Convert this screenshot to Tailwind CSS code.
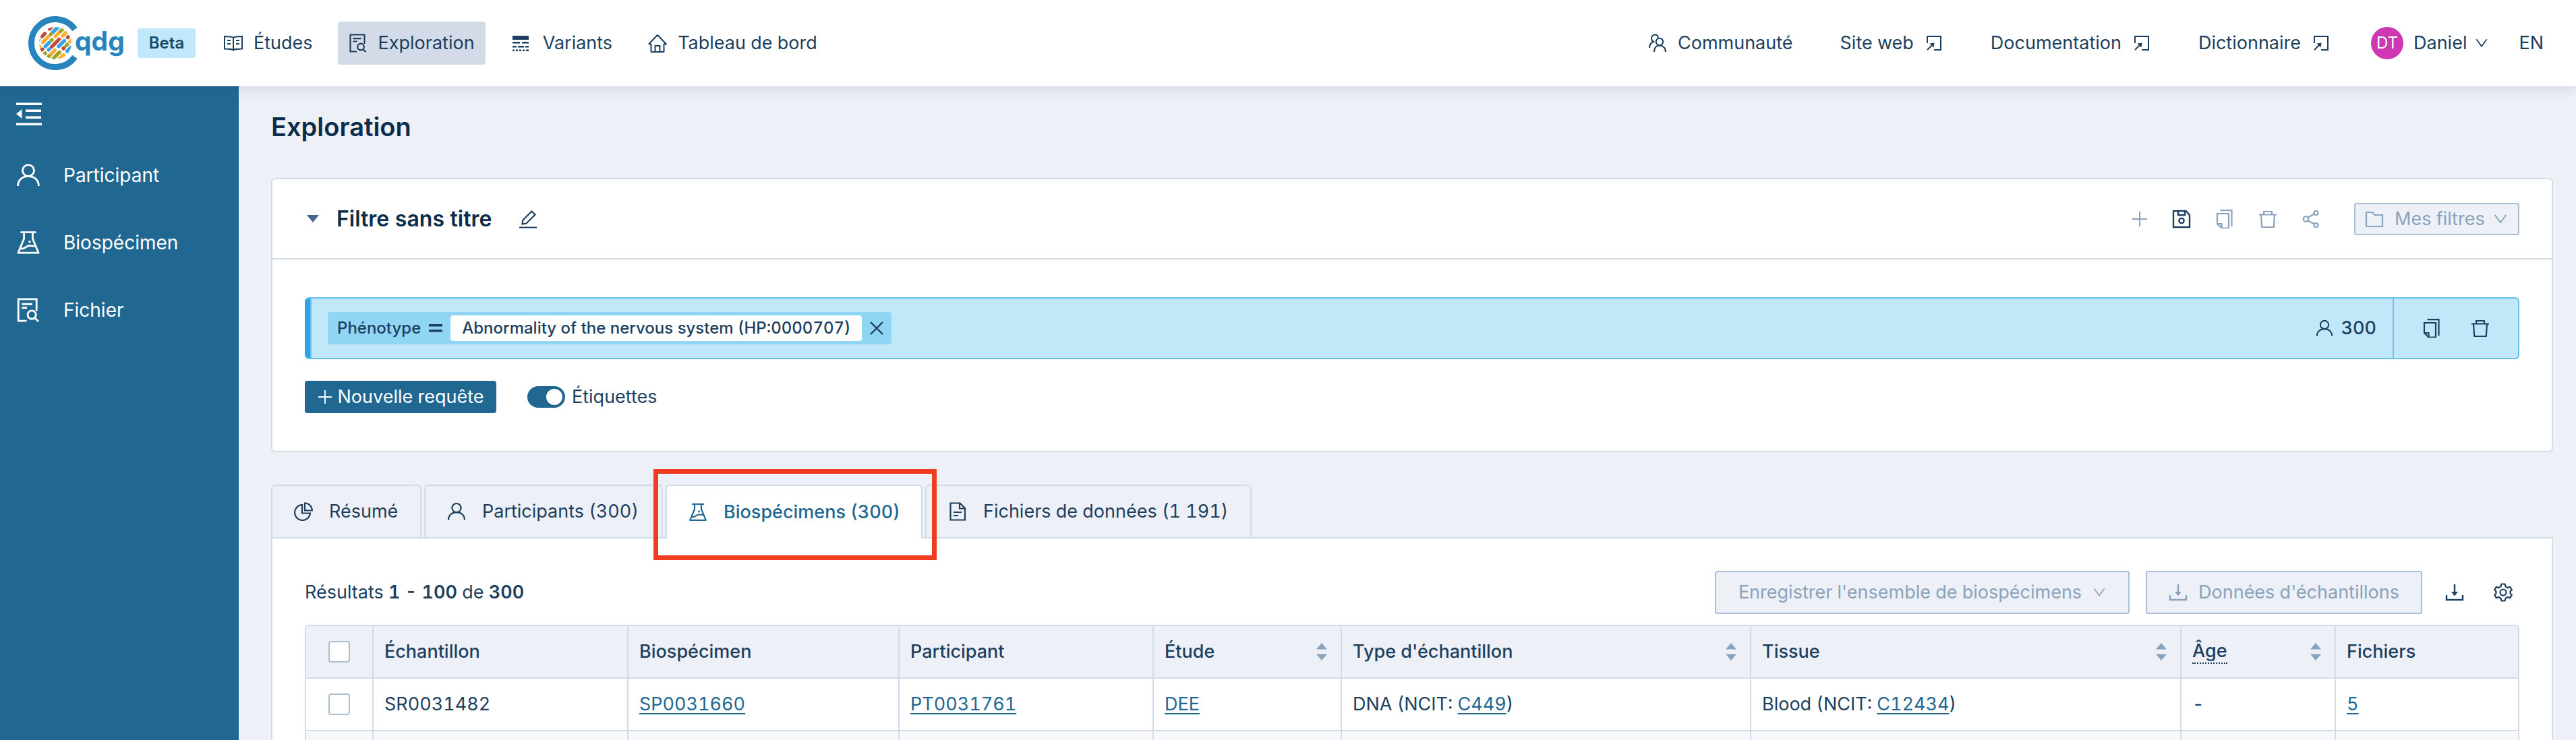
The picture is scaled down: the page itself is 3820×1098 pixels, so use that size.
<!DOCTYPE html>
<html lang="fr">
<head>
<meta charset="utf-8">
<title>Exploration</title>
<script src="https://cdn.jsdelivr.net/npm/@tailwindcss/browser@4"></script>
</head>
<body class="flex h-screen flex-col overflow-hidden bg-[#edf0f6] font-[Inter,sans-serif] text-[27px] leading-[44px] text-[#1d3f5f] tabular-nums">
<svg class="hidden" aria-hidden="true">
  <defs>
    <symbol id="user" viewBox="0 0 28 28"><g fill="none" stroke="currentColor" stroke-width="2.2"><circle cx="14" cy="8.6" r="6.6"/><path d="M2 26.500C2 19 7.500 15.200 14 15.200S26 19 26 26.500"/></g></symbol>
    <symbol id="flask" viewBox="0 0 28 28"><g fill="none" stroke="currentColor" stroke-width="2.2" stroke-linejoin="round"><path d="M5 2h18M9 2v7.500L2.200 25.800h23.600L19 9.500V2"/><path d="M4.500 20.500c5 2.500 6-3 11-3 3 0 4 1 7 0"/></g><circle cx="15.500" cy="13" r="1.400" fill="currentColor"/></symbol>
    <symbol id="filesearch" viewBox="0 0 28 28"><g fill="none" stroke="currentColor" stroke-width="2.200"><path d="M12 26.500H2.500v-25h21v13.500M6.500 7.200H18.500M6.500 11.500h6"/><circle cx="18" cy="19.500" r="4.800"/><path d="M21.300 23l4.400 4.200"/></g></symbol>
    <symbol id="link" viewBox="0 0 28 28"><g fill="none" stroke="currentColor" stroke-width="2"><path d="M4 14V4h20v20H14M4 24l8-8"/></g><path d="M7.500 14.500l7-1-1 7z" fill="currentColor"/></symbol>
    <symbol id="down" viewBox="64 64 896 896"><path fill="currentColor" d="M884 256h-75c-5.100 0-9.900 2.500-12.900 6.600L512 654.200 227.900 262.600c-3-4.100-7.800-6.600-12.900-6.600h-75c-6.500 0-10.300 7.400-6.500 12.700l352.600 486.100c12.800 17.600 39 17.600 51.700 0l352.600-486.100c3.900-5.300.1-12.700-6.400-12.700z"/></symbol>
    <symbol id="copy" viewBox="0 0 28 28"><g fill="none" stroke="currentColor" stroke-width="2.200"><path d="M7.500 1.200h17V25"/><path d="M3 6h17v21.500H9.500L3 21z"/><path d="M3 21h6.500v6.500"/></g></symbol>
    <symbol id="trash" viewBox="0 0 28 28"><path fill="none" stroke="currentColor" stroke-width="2.200" stroke-linejoin="round" d="M1 7.500h26M8 7.500V3h12v4.500M4 7.500l1.200 18.500h17.600L24 7.500"/></symbol>
    <symbol id="download" viewBox="0 0 28 28"><path fill="none" stroke="currentColor" stroke-width="2.400" d="M2 18v7h24v-7M14 2v14"/><path fill="currentColor" d="M9 13h10l-5 6.500z"/></symbol>
    <symbol id="sort" viewBox="0 0 16 28"><path fill="currentColor" d="M8 1l8 9.500H0zM8 27l8-9.500H0z"/></symbol>
    <symbol id="plus" viewBox="0 0 24 24"><path stroke="currentColor" stroke-width="2" d="M12 1v22M1 12h22"/></symbol>
  </defs>
</svg>

<header class="relative z-10 flex h-32 shrink-0 items-center bg-white pr-12 pl-[42px] shadow-[0_0_20px_rgba(45,64,115,0.2)]">
  <a href="#" aria-label="qdg">
    <svg class="h-20 w-[144px]" viewBox="42 24 144 80">
      <path d="M111 43.600A35.500 35.500 0 1 0 111 84.400" fill="none" stroke="#2983bd" stroke-width="9"/>
      <clipPath id="globe"><circle cx="82" cy="64" r="24"/></clipPath>
      <g clip-path="url(#globe)"><g transform="translate(82 64) rotate(-45)" stroke-width="5.400" stroke-linecap="round" fill="none">
        <path stroke="#bf4b3b" d="M-7-21h6M9-21h4M-8 0H8M-21-7h1M19 7h1M3 14h1M-24-8h1"/>
        <path stroke="#35a2e8" d="M-22-21h8M9-14h12M-14-7h8M-14 0h1M0 7h12M4 21h8"/>
        <path stroke="#fdb034" d="M-12-14h11M7-7h9M15 0h12M-17 7h9M-12 21h8M17 14h8M-22-13h2"/>
        <path stroke="#a1a12d" d="M5-14h-1M-1-7h1M-22 0h1M22-7h-1M-21 7h1M-18 14h13M9 14h2M22-7h-4"/>
      </g></g>
      <text x="111" y="75" fill="#2983bd" font-family="Inter" font-weight="700" font-size="39">qdg</text>
    </svg>
  </a>
  <span class="ml-[18px] w-[86px] rounded bg-[#c1e8fa] text-center text-[24px] font-semibold text-[#164a66]">Beta</span>
  <nav class="ml-[26px] flex gap-[21px]">
    <a href="#" class="flex h-16 items-center gap-4 px-4">
      <svg class="size-7" viewBox="0 0 28 28" fill="none" stroke="currentColor" stroke-width="2"><path d="M14 24.500c-2-1.700-4-2-13-2V4c9 0 11 .5 13 2 2-1.500 4-2 13-2v18.500c-9 0-11 .3-13 2zM14 6v18M5 10h5M5 15h5M18 10h5M18 15h5"/></svg>Études</a>
    <a href="#" class="flex h-16 items-center gap-4 rounded bg-[#d4dbe8] px-4"><svg class="size-7"><use href="#filesearch"/></svg>Exploration</a>
    <a href="#" class="flex h-16 items-center gap-5 px-4">
      <svg class="size-7" viewBox="0 0 28 28"><path fill="currentColor" d="M3 3h24v6H3zM3 12h11v2.500H3zM17 12h10v2.500H17zM3 18h6v2.500H3zM11 18h9v2.500h-9zM22 18h5v2.500h-5zM3 23.500h3v2.500H3zM8 23.500h3v2.500H8zM13 23.500h3v2.500h-3zM18 23.500h3v2.500h-3zM23 23.500h4v2.500h-4z"/></svg>Variants</a>
    <a href="#" class="flex h-16 items-center gap-4 px-4">
      <svg class="size-7" viewBox="0 0 28 28" fill="none" stroke="currentColor" stroke-width="2" stroke-linejoin="round"><path d="M4.500 15v12h19V15M1 15.500L14 2l13 13.500h-3.500M1 15.500h3.500M10.500 27v-9h7v9"/></svg>Tableau de bord</a>
  </nav>
  <nav class="ml-auto flex items-center gap-[70px]">
    <a href="#" class="flex items-center gap-4">
      <svg class="size-7" viewBox="0 0 28 28" fill="none" stroke="currentColor" stroke-width="2"><circle cx="17" cy="12" r="5.200"/><path d="M9 27c0-6 3-9.500 8-9.500s9 3.500 9 9.500M15 6C14.500 3 13 1.500 10.500 1.500 7 1.500 5 4 5 7c0 2.500 1 4 3 5-4 1.500-6 4.500-6 9"/></svg>Communauté</a>
    <a href="#" class="flex items-center gap-4">Site web<svg class="size-7"><use href="#link"/></svg></a>
    <a href="#" class="flex items-center gap-4">Documentation<svg class="size-7"><use href="#link"/></svg></a>
    <a href="#" class="flex items-center gap-4">Dictionnaire<svg class="size-7"><use href="#link"/></svg></a>
  </nav>
  <button class="ml-[60px] flex items-center"><span class="mr-[15px] flex size-12 items-center justify-center rounded-full bg-[#cd37b2] text-[24px] text-white">DT</span>Daniel<svg class="ml-3 size-5"><use href="#down"/></svg></button>
  <button class="ml-[45px]">EN</button>
</header>

<div class="flex min-h-0 flex-1">
  <aside class="w-[354px] shrink-0 bg-[#206892] px-6 pt-[22px] text-white">
    <button class="block" aria-label="Réduire le menu"><svg class="h-10 w-[38px]" viewBox="0 0 38 40" fill="currentColor"><path d="M0 2.500h38v3.500H0zM14 12.500h23V16H14zM14 22.500h23V26H14zM0 32.500h38V36H0zM8.500 12v14L0 19z"/></svg></button>
    <nav class="mt-[30px] flex flex-col gap-5 text-[28px]">
      <a href="#" class="flex h-20 items-center gap-[34px]"><svg class="size-9"><use href="#user"/></svg>Participant</a>
      <a href="#" class="flex h-20 items-center gap-[34px]"><svg class="size-9"><use href="#flask"/></svg>Biospécimen</a>
      <a href="#" class="flex h-20 items-center gap-[34px]"><svg class="size-9"><use href="#filesearch"/></svg>Fichier</a>
    </nav>
  </aside>

  <main class="min-w-0 flex-1 overflow-hidden pt-8 pr-[34px] pl-12">
    <h1 class="mb-12 text-[38px] leading-[56px] font-semibold text-[#0b2c4a]">Exploration</h1>

    <section class="rounded-md border-2 border-[#d3dbe8] bg-white">
      <div class="flex h-[119px] items-center border-b-2 border-[#d3dbe8] px-12">
        <button class="ml-[3px]" aria-label="Replier"><svg class="h-[11px] w-[18px]" viewBox="0 0 18 11"><path fill="#45648a" d="M0 0h18L9 11z"/></svg></button>
        <h2 class="ml-[26px] text-[32px] font-semibold text-[#0b2c4a]">Filtre sans titre</h2>
        <button class="ml-10" aria-label="Renommer"><svg class="size-7" viewBox="0 0 28 28" fill="none" stroke="currentColor" stroke-width="2.200"><path d="M1 26.500h26M5.500 21.500l1-6L19.500 2.500l5 5-13 13z"/></svg></button>
        <div class="ml-auto flex items-center gap-9 text-[#8aa2bb]">
          <button aria-label="Nouveau"><svg class="size-6"><use href="#plus"/></svg></button>
          <button class="text-[#1d3f5f]" aria-label="Enregistrer"><svg class="size-7" viewBox="0 0 28 28" fill="none" stroke="currentColor" stroke-width="2.400"><path d="M2 2h18.500L26 8v18H2zM9 2v6h10V2"/><circle cx="14" cy="16.500" r="3.600"/></svg></button>
          <button aria-label="Dupliquer"><svg class="size-7"><use href="#copy"/></svg></button>
          <button aria-label="Supprimer"><svg class="size-7"><use href="#trash"/></svg></button>
          <button aria-label="Partager"><svg class="size-7" viewBox="0 0 28 28" fill="none" stroke="currentColor" stroke-width="2.200"><circle cx="6.500" cy="14" r="3.800"/><circle cx="21.500" cy="5" r="3"/><circle cx="21.500" cy="23" r="3"/><path d="M9.500 11.500L19 6.500M9.500 16.500L19 21.500"/></svg></button>
          <button class="ml-3.5 flex h-12 w-[245px] items-center rounded border-2 border-[#abbfd3] bg-[#edf0f6] pl-3.5"><svg class="size-7" viewBox="0 0 28 28" fill="none" stroke="currentColor" stroke-width="2.200"><path d="M2 4h9l3.500 4H26v17H2z"/></svg><span class="ml-4 whitespace-nowrap">Mes filtres</span><svg class="ml-3 size-[22px]"><use href="#down"/></svg></button>
        </div>
      </div>
      <div class="px-12 py-14">
        <div class="flex h-[92px] overflow-hidden rounded-md border-2 border-l-0 border-[#66c1ec] bg-[#c1e8f9]">
          <div class="-my-0.5 w-2.5 border-r-2 border-[#66c1ec] bg-[#30a2e8]"></div>
          <div class="flex flex-1 items-center px-6">
            <div class="flex h-12 items-center rounded bg-[#91d5f4] pr-3 pl-3.5 text-[24px] font-medium">Phénotype
              <svg class="ml-3 h-3.5 w-5" viewBox="0 0 20 14"><path fill="currentColor" d="M0 1h20v3.500H0zM0 9h20v3.500H0z"/></svg>
              <span class="ml-3 rounded bg-white px-[17px] leading-[38px]">Abnormality of the nervous system (HP:0000707)</span>
              <button class="ml-3" aria-label="Retirer"><svg class="size-5" viewBox="0 0 20 20"><path stroke="currentColor" stroke-width="2.400" d="M1 1l18 18M19 1L1 19"/></svg></button>
            </div>
            <svg class="ml-auto size-[26px]"><use href="#user"/></svg><span class="ml-3 font-medium">300</span>
          </div>
          <div class="flex w-[186px] items-center gap-11 border-l-2 border-[#66c1ec] pl-[42px]">
            <button aria-label="Dupliquer la requête"><svg class="size-7"><use href="#copy"/></svg></button>
            <button aria-label="Supprimer la requête"><svg class="size-7"><use href="#trash"/></svg></button>
          </div>
        </div>
        <div class="mt-8 flex h-12 items-center">
          <button class="flex h-12 w-[284px] items-center justify-center gap-2 rounded bg-[#206892] whitespace-nowrap text-white"><svg class="size-[22px]"><use href="#plus"/></svg>Nouvelle requête</button>
          <label class="ml-[46px] flex items-center gap-2.5"><input type="checkbox" role="switch" checked class="flex h-8 w-14 appearance-none items-center justify-end rounded-full bg-[#206892] px-1 before:size-6 before:rounded-full before:bg-white before:shadow-md">Étiquettes</label>
        </div>
      </div>
    </section>

    <div class="mt-12 flex h-[78px] gap-1" role="tablist">
      <button role="tab" class="flex w-[223px] items-center gap-6 rounded-t-md border-2 border-b-0 border-[#d3dbe8] pl-8"><svg class="size-7" viewBox="0 0 28 28" fill="none" stroke="currentColor" stroke-width="2.200"><path d="M12 4A11.500 11.500 0 1 0 24 16.500H12zM16 1.500V12.500H26.800A11 11 0 0 0 16 1.500z"/></svg>Résumé</button>
      <button role="tab" class="flex w-[354px] items-center gap-6 rounded-t-md border-2 border-b-0 border-[#d3dbe8] pl-8"><svg class="size-7"><use href="#user"/></svg><span class="whitespace-nowrap">Participants (300)</span></button>
      <button role="tab" aria-selected="true" class="relative z-10 flex h-20 w-[381px] items-center gap-6 rounded-t-md border-2 border-b-0 border-[#d3dbe8] bg-white pl-8 text-[#206892]"><svg class="size-7"><use href="#flask"/></svg><span class="font-medium whitespace-nowrap">Biospécimens (300)</span>
        <span class="absolute -top-[25px] -left-[20px] h-[135px] w-[420px] border-[7px] border-[#f03c1f]"></span></button>
      <button role="tab" class="flex w-[484px] items-center gap-6 rounded-t-md border-2 border-b-0 border-[#d3dbe8] pl-8"><svg class="size-7" viewBox="0 0 28 28" fill="none" stroke="currentColor" stroke-width="2.200"><path d="M3.500 1.500h14L25 9v17.500H3.500zM17 1.500V9.500h8M8 15h12M8 20h7"/></svg><span class="whitespace-nowrap">Fichiers de données (1 191)</span></button>
    </div>

    <section class="border-2 border-[#d3dbe8] bg-white px-12 pt-12">
      <div class="mb-4 flex h-16 items-center">
        <p>Résultats <b class="font-semibold">1 - 100</b> de <b class="font-semibold">300</b></p>
        <button class="ml-auto flex h-16 w-[615px] items-center justify-center gap-4 rounded border-2 border-[#abbfd3] bg-[#edf0f6] text-[#8aa2bb]">Enregistrer l'ensemble de biospécimens<svg class="size-5"><use href="#down"/></svg></button>
        <button class="ml-6 flex h-16 w-[410px] items-center justify-center gap-4 rounded border-2 border-[#abbfd3] bg-[#edf0f6] text-[#8aa2bb]"><svg class="size-7"><use href="#download"/></svg>Données d'échantillons</button>
        <button class="ml-[34px]" aria-label="Télécharger"><svg class="size-7"><use href="#download"/></svg></button>
        <button class="mr-2.5 ml-11" aria-label="Colonnes"><svg class="size-7" viewBox="0 0 28 28" fill="none" stroke="currentColor" stroke-width="2.200" stroke-linejoin="round"><circle cx="14" cy="14" r="4.500"/><path d="M11.500 1.500h5l1 3.800 3 1.800 3.800-1.200 2.500 4.300-2.300 2.300v3l2.300 2.300-2.500 4.300-3.800-1.200-3 1.800-1 3.800h-5l-1-3.800-3-1.800-3.800 1.200-2.500-4.300 2.300-2.300v-3l-2.300-2.300 2.500-4.300 3.800 1.200 3-1.800z"/></svg></button>
      </div>
      <div class="overflow-hidden rounded-t-md border-2 border-b-0 border-[#d3dbe8]">
        <table class="w-full table-fixed border-separate border-spacing-0 text-left [&_a]:text-[#206892] [&_a]:underline [&_a]:decoration-2 [&_a]:underline-offset-4 [&_td]:h-[78px] [&_td]:border-r-2 [&_td]:border-b-2 [&_td]:border-[#d3dbe8] [&_td]:px-4 [&_td]:py-0 [&_td:last-child]:border-r-0 [&_th]:h-[78px] [&_th]:border-r-2 [&_th]:border-b-2 [&_th]:border-[#d3dbe8] [&_th]:bg-[#edf0f6] [&_th]:px-4 [&_th]:py-0 [&_th]:font-medium [&_th:last-child]:border-r-0">
          <colgroup><col class="w-[100px]"><col class="w-[378px]"><col class="w-[402px]"><col class="w-[377px]"><col class="w-[279px]"><col class="w-[607px]"><col class="w-[638px]"><col class="w-[229px]"><col class="w-[270px]"></colgroup>
          <thead><tr>
            <th><input type="checkbox" aria-label="Tout sélectionner" class="mx-auto block size-8 appearance-none rounded border-2 border-[#abbfd3] bg-white"></th>
            <th>Échantillon</th><th>Biospécimen</th><th>Participant</th>
            <th><div class="flex items-center justify-between">Étude<svg class="mr-1 h-7 w-4 text-[#8aa2bb]"><use href="#sort"/></svg></div></th>
            <th><div class="flex items-center justify-between">Type d'échantillon<svg class="mr-1 h-7 w-4 text-[#8aa2bb]"><use href="#sort"/></svg></div></th>
            <th><div class="flex items-center justify-between">Tissue<svg class="mr-1 h-7 w-4 text-[#8aa2bb]"><use href="#sort"/></svg></div></th>
            <th><div class="flex items-center justify-between"><span class="border-b-2 border-dotted border-[#1d3f5f] leading-[34px]">Âge</span><svg class="mr-1 h-7 w-4 text-[#8aa2bb]"><use href="#sort"/></svg></div></th>
            <th>Fichiers</th>
          </tr></thead>
          <tbody>
            <tr>
              <td><input type="checkbox" aria-label="Sélectionner SR0031482" class="mx-auto block size-8 appearance-none rounded border-2 border-[#abbfd3] bg-white"></td>
              <td>SR0031482</td><td><a href="#">SP0031660</a></td><td><a href="#">PT0031761</a></td><td><a href="#">DEE</a></td>
              <td>DNA (NCIT: <a href="#">C449</a>)</td><td>Blood (NCIT: <a href="#">C12434</a>)</td><td>-</td><td><a href="#">5</a></td>
            </tr>
            <tr class="bg-[#f6f8fc]"><td></td><td></td><td></td><td></td><td></td><td></td><td></td><td></td><td></td></tr>
          </tbody>
        </table>
      </div>
    </section>
  </main>
</div>
</body>
</html>
